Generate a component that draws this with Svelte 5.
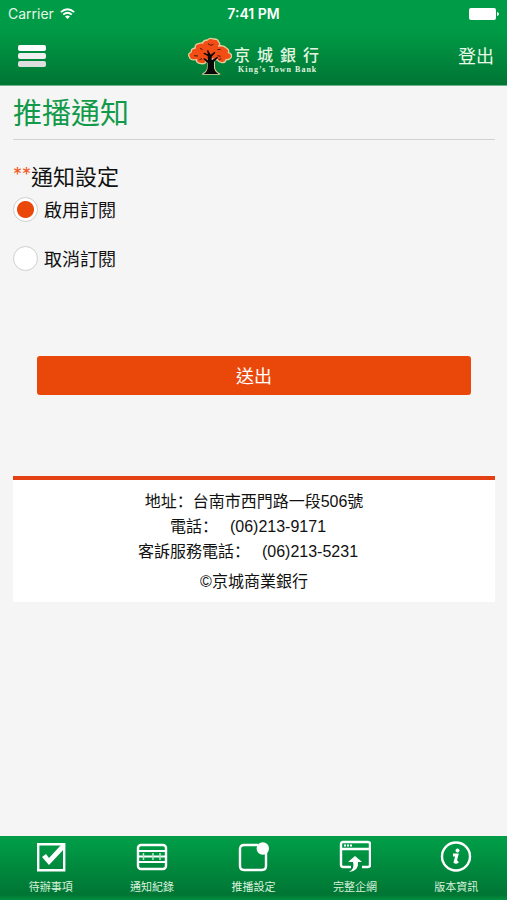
<script lang="ts">
  type Tab = { id: string; label: string };

  const tabs: Tab[] = [
    { id: "todo", label: "待辦事項" },
    { id: "records", label: "通知紀錄" },
    { id: "push", label: "推播設定" },
    { id: "web", label: "完整企網" },
    { id: "about", label: "版本資訊" },
  ];

  const phones = [
    { label: "電話：", value: "(06)213-9171" },
    { label: "客訴服務電話：", value: "(06)213-5231" },
  ];

  let subscription = $state("on");
</script>

<div class="app">
  <header>
    <div class="status">
      <span class="carrier">
        Carrier
        <svg width="15" height="11" viewBox="0 0 15 11" fill="none" stroke="#fff" stroke-width="1.8" aria-hidden="true">
          <path d="M.8 4.2Q7.5-1.8 14.2 4.2M3.2 6.6Q7.5 2.8 11.8 6.6" />
          <path d="M5 8.4Q7.5 6.4 10 8.4L7.5 11z" fill="#fff" stroke="none" />
        </svg>
      </span>
      <span class="time">7:41 PM</span>
      <svg class="battery" width="30" height="12" viewBox="0 0 30 12" fill="#fff" aria-hidden="true">
        <rect width="27" height="12" rx="2" />
        <path d="M28 4q2 .4 2 2t-2 2z" />
      </svg>
    </div>
    <nav class="bar">
      <button class="menu" type="button" aria-label="選單">
        <svg width="28" height="22" viewBox="0 0 28 22" aria-hidden="true">
          <rect width="28" height="6" rx="2" fill="#fff" />
          <rect y="8" width="28" height="6" rx="2" fill="#efefef" />
          <rect y="16" width="28" height="6" rx="2" fill="#dedede" />
        </svg>
      </button>
      <div class="brand">
        <svg width="46" height="38" viewBox="8 8 138 114" aria-hidden="true">
          <g stroke="#e3cf9a" stroke-width="4" stroke-linejoin="round">
            <path d="M58 119q16-8 15-22V72h20v25q0 14 16 22z" fill="#080808" />
            <path d="M58 26q2-8 14-9 8-8 18-3 14-1 16 9 7 6 0 12 16-3 23 6 10 5 6 14 12 4 9 13-4 9-16 8-1 10-13 9-9-1-12-8l-16-3-17 4q-3 12-17 10-16-2-13-12-20 3-22-8-6-10 6-15-2-10 12-12-3-11 10-13 4-3 12-2z" fill="#f34d16" />
          </g>
          <path d="M60 119q14-8 13-22V86L60 74l2-3 12 7-1-13-13-7 2-3 12 5-3-11 3-2 8 14 12-9 2 3-11 12v11l17-11 2 3-12 13v16q0 14 14 20z" fill="#080808" />
          <path d="M74 28l8 5 8-3M50 42l8 4M102 46l10-1M32 64l12 1M48 76l8-3M102 64l10 2M106 76l8-3" fill="none" stroke="#4a1a0c" stroke-width="3" />
        </svg>
        <div class="wordmark">
          <span class="zh">京城銀行</span>
          <span class="en">King’s Town Bank</span>
        </div>
      </div>
      <a class="logout" href="#logout">登出</a>
    </nav>
  </header>

  <main>
    <h1>推播通知</h1>

    <form onsubmit={(e) => e.preventDefault()}>
      <fieldset>
        <legend><span class="required">**</span>通知設定</legend>
        <label>
          <input type="radio" name="subscription" value="on" bind:group={subscription} />
          啟用訂閱
        </label>
        <label>
          <input type="radio" name="subscription" value="off" bind:group={subscription} />
          取消訂閱
        </label>
      </fieldset>
      <button class="submit" type="submit">送出</button>
    </form>

    <footer>
      <p>地址：台南市西門路一段506號</p>
      {#each phones as phone (phone.label)}
        <p>{phone.label}<span class="phone">{phone.value}</span></p>
      {/each}
      <p class="copyright">©京城商業銀行</p>
    </footer>
  </main>

  <nav class="tabs">
    {#each tabs as tab (tab.id)}
      <a href="#{tab.id}">
        <svg width="32" height="32" viewBox="0 0 32 32" fill="none" stroke="#fff" stroke-width="2.4" aria-hidden="true">
          {#if tab.id === "todo"}
            <path d="M3.2 4.2h26v26h-26z" />
            <path d="M7 17l4-3 3 4L26 5h3v4L14 25z" fill="#fff" stroke="none" />
          {:else if tab.id === "records"}
            <rect x="2" y="5" width="28" height="24" rx="3" />
            <path d="M2 11h28M2 16.5h28M2 22h28" stroke-width="2" />
            <path d="M7.5 13v7M17 13v7M24 13v7" stroke-width="1.5" stroke="#bfe6c9" />
          {:else if tab.id === "push"}
            <path d="M21 5H7Q3 5 3 9v17q0 4 4 4h18q4 0 4-4V13" />
            <circle cx="25.800" cy="8.500" r="6.200" fill="#fff" stroke="none" />
          {:else if tab.id === "web"}
            <path d="M12 27H4q-2 0-2-2V4q0-2 2-2h25q2 0 2 2v21q0 2-2 2h-6M2 9h29" />
            <path d="M5 5.500h2m1 0h2m1 0h2" stroke-width="2" />
            <path d="M10 32q6-3 4-10h-5l7-6 7 6h-4q1 9-9 10z" fill="#fff" stroke="none" />
          {:else}
            <circle cx="16" cy="16.500" r="14" />
            <circle cx="17.500" cy="10.500" r="2" fill="#fff" stroke="none" />
            <path d="M13 15h4l-2 7q1 1 3-.8" stroke-width="2.800" />
          {/if}
        </svg>
        <span>{tab.label}</span>
      </a>
    {/each}
  </nav>
</div>

<style>
  :global(body) {
    margin: 0;
    background: #f5f5f5;
  }

  .app {
    min-height: 100vh;
    display: flex;
    flex-direction: column;
    color: #111;
    font-family: "Liberation Sans", "Noto Sans CJK TC", sans-serif;
  }

  header {
    background: linear-gradient(#009b46 35%, #007534);
    color: #fff;
    border-bottom: 1px solid #6fb48c;
  }

  .status {
    display: grid;
    grid-template-columns: 1fr auto 1fr;
    align-items: center;
    height: 27px;
    padding: 0 8px;
    font-family: Inter, sans-serif;
    font-size: 14px;
  }

  .carrier {
    display: flex;
    align-items: center;
    gap: 6px;
    color: #e4f6e6;
  }

  .time {
    font-weight: 600;
  }

  .battery {
    justify-self: end;
  }

  .bar {
    display: grid;
    grid-template-columns: 1fr auto 1fr;
    align-items: center;
    box-sizing: border-box;
    height: 58px;
    padding: 0 13px 0 18px;
  }

  .menu {
    justify-self: start;
    display: flex;
    padding: 0;
    border: none;
    background: none;
    cursor: pointer;
  }

  .brand {
    display: flex;
    align-items: center;
    gap: 2px;
  }

  .wordmark {
    display: flex;
    flex-direction: column;
    padding-top: 8px;
    color: #e2f5e0;
    font-family: "Liberation Serif", "Noto Sans CJK TC", serif;
    white-space: nowrap;
  }

  .zh {
    font-size: 16px;
    font-weight: 500;
    line-height: 18px;
    letter-spacing: 7px;
  }

  .en {
    font-size: 8px;
    font-weight: bold;
    line-height: 9px;
    letter-spacing: 1px;
    padding-left: 4px;
  }

  .logout {
    justify-self: end;
    padding-bottom: 2px;
    color: #e9fae9;
    font-size: 18px;
    text-decoration: none;
  }

  main {
    flex: 1;
    padding: 0 12px 24px 13px;
  }

  h1 {
    margin: 0;
    padding: 6px 0 3px;
    border-bottom: 1px solid #d2d2d2;
    color: #129a4a;
    font-size: 29px;
    font-weight: normal;
    line-height: 44px;
  }

  fieldset {
    margin: 0;
    padding: 24px 0 0;
    border: none;
  }

  legend {
    float: left;
    width: 100%;
    padding: 0;
    font-size: 22px;
    line-height: 28px;
  }

  .required {
    color: #f15a24;
    font-family: Inter, sans-serif;
    font-size: 18px;
    line-height: 1;
    vertical-align: 4px;
  }

  label {
    clear: both;
    display: flex;
    align-items: center;
    gap: 6px;
    height: 34px;
    margin-bottom: 15px;
    font-size: 18px;
  }

  input {
    appearance: none;
    box-sizing: border-box;
    width: 25px;
    height: 25px;
    margin: 0;
    border: 1px solid #cfcfcf;
    border-radius: 50%;
    background: #fff;
  }

  input:checked {
    background: radial-gradient(circle, #ea480b 8px, #fff 9px);
  }

  .submit {
    display: block;
    width: calc(100% - 48px);
    height: 39px;
    margin: 66px auto 81px;
    padding: 0 0 2px;
    border: none;
    border-radius: 3px;
    background: #ea480b;
    color: #fff;
    font: inherit;
    font-size: 18px;
    cursor: pointer;
  }

  footer {
    padding: 9px 0 8px;
    border-top: 4px solid #e34014;
    background: #fff;
    font-family: "Liberation Sans", "Noto Sans CJK SC", sans-serif;
    font-size: 16px;
    line-height: 25px;
    text-align: center;
  }

  footer p {
    margin: 0;
  }

  .phone {
    margin: 0 12px;
  }

  footer .copyright {
    margin-top: 5px;
  }

  .tabs {
    display: grid;
    grid-template-columns: repeat(5, 1fr);
    background: linear-gradient(#009b46 10%, #007534 92%, #009040);
  }

  .tabs a {
    display: flex;
    flex-direction: column;
    align-items: center;
    gap: 7px;
    padding: 4px 0;
    color: #d9f2dc;
    font-size: 11px;
    line-height: 17px;
    text-decoration: none;
  }
</style>
